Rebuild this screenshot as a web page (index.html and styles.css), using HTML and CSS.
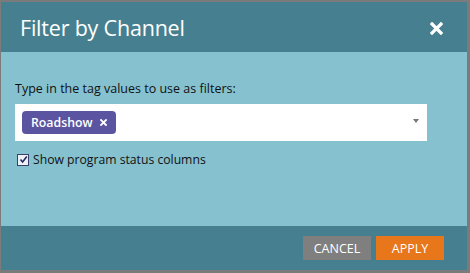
FILE: index.html
```html
<!DOCTYPE html>
<html>
<head>
<meta charset="utf-8">
<link rel="stylesheet" href="styles.css">
</head>
<body>
<div class="dialog">
  <div class="header">
    <div class="title">Filter by Channel</div>
    <svg class="close" width="13" height="13" viewBox="0 0 13 13"><path d="M2 2 L11 11 M11 2 L2 11" stroke="#fff" stroke-width="3.2" stroke-linecap="square"/></svg>
  </div>
  <div class="body">
    <div class="label">Type in the tag values to use as filters:</div>
    <div class="input">
      <span class="tag"><span>Roadshow</span><svg class="tag-x" width="7" height="7" viewBox="0 0 7 7"><path d="M1 1 L6 6 M6 1 L1 6" stroke="#fff" stroke-width="1.8" stroke-linecap="square"/></svg></span>
      <span class="caret"></span>
    </div>
    <label class="check"><span class="box"><svg width="9" height="9" viewBox="0 0 9 9"><path d="M1.5 4.5 L3.6 7 L7.8 1.5" stroke="#1c2a60" stroke-width="1.6" fill="none"/></svg></span>Show program status columns</label>
  </div>
  <div class="footer">
    <button class="btn cancel">CANCEL</button>
    <button class="btn apply">APPLY</button>
  </div>
</div>
</body>
</html>
```
FILE: styles.css
```css
html, body {
  margin: 0;
  padding: 0;
  background: #7b7b7b;
}
body {
  width: 470px;
  height: 273px;
  font-family: "Open Sans", "DejaVu Sans", sans-serif;
}
.dialog {
  margin: 2px 3px 0 1px;
  width: 466px;
  height: 268px;
  display: flex;
  flex-direction: column;
}
.header {
  height: 50px;
  background: #467f90;
  display: flex;
  align-items: center;
  justify-content: space-between;
  padding: 0 24px 0 19px;
}
.title {
  color: #fff;
  font-size: 21.5px;
  letter-spacing: -0.2px;
}
.close {
  display: block;
  margin-top: 2px;
}
.body {
  height: 174px;
  background: #86c1d0;
  padding: 0 40px 0 14px;
  box-sizing: border-box;
}
.label {
  margin-top: 28px;
  font-size: 12.5px;
  color: #111;
  height: 24px;
  line-height: 18px;
}
.input {
  background: #fff;
  height: 37px;
  display: flex;
  align-items: center;
  padding-left: 7px;
  position: relative;
}
.tag {
  background: #5b55a1;
  color: #fff;
  font-size: 12.3px;
  font-weight: 600;
  border-radius: 4px;
  height: 23px;
  display: inline-flex;
  align-items: center;
  white-space: nowrap;
  padding: 0 9px 0 9px;
  gap: 8px;
}
.tag-x {
  display: block;
}
.caret {
  position: absolute;
  right: 8px;
  top: 15px;
  width: 0;
  height: 0;
  border-left: 3.5px solid transparent;
  border-right: 3.5px solid transparent;
  border-top: 4px solid #777;
}
.check {
  display: flex;
  align-items: center;
  margin-top: 10px;
  font-size: 12.2px;
  color: #111;
}
.box {
  width: 10px;
  height: 10px;
  border: 1px solid #3a3f6a;
  background: #eef0f6;
  margin: 0 4px 0 2px;
  display: flex;
  align-items: center;
  justify-content: center;
}
.footer {
  flex: 1;
  background: #467f90;
  display: flex;
  justify-content: flex-end;
  align-items: flex-start;
  padding: 10px 23px 0 0;
  gap: 5px;
}
.btn {
  border: none;
  color: #fff;
  font-family: "Open Sans", sans-serif;
  font-size: 12.5px;
  height: 24px;
  width: 68px;
  padding: 0;
}
.cancel {
  background: #7f7f7f;
}
.apply {
  background: #e8761a;
}
```
